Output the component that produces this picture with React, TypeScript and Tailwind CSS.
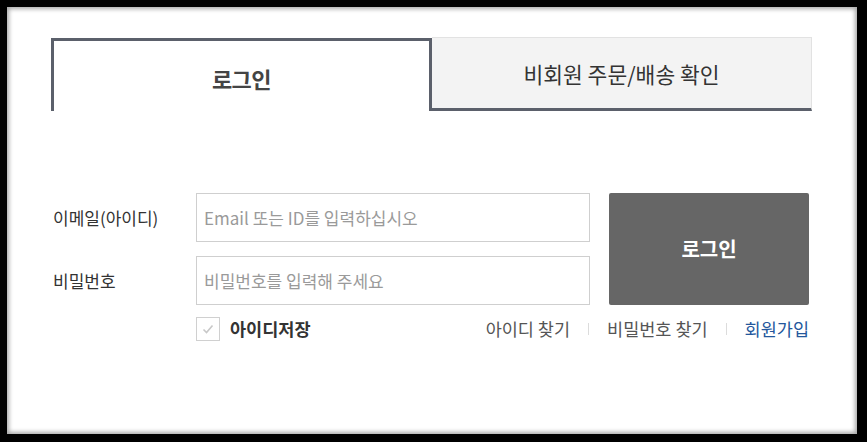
const font = "font-['Noto_Sans_CJK_KR','Noto_Sans',sans-serif]";

function Tabs() {
  return (
    <div className="flex items-end">
      <div className="flex h-[73px] w-[381px] items-center justify-center border-[3px] border-b-0 border-[#5b606b] bg-white pt-[4px]">
        <span className="text-[22px] font-bold leading-none tracking-[-0.5px] text-[#444]">로그인</span>
      </div>
      <div className="flex h-[74px] w-[380px] items-center justify-center border-t border-r border-b-[3px] border-t-[#e2e2e2] border-r-[#e2e2e2] border-b-[#5b606b] bg-[#f3f3f3] pt-[2px]">
        <span className="text-[21.5px] leading-none text-[#333]">비회원 주문/배송 확인</span>
      </div>
    </div>
  );
}

function Field({ label, placeholder, type }: { label: string; placeholder: string; type: string }) {
  return (
    <div className="flex items-center">
      <label className="w-[145px] pl-[2px] text-[17px] leading-none text-[#333]">{label}</label>
      <input
        type={type}
        placeholder={placeholder}
        className={`${font} h-[49px] w-[394px] border border-[#cfcfcf] bg-white pl-[7px] text-[17px] text-[#333] outline-none placeholder:text-[#9a9a9a]`}
      />
    </div>
  );
}

function Divider() {
  return <span className="mx-[18px] h-[12px] w-px bg-[#dcdcdc]" />;
}

export default function App() {
  return (
    <div className={`${font} h-[442px] w-[867px] bg-black pt-[7px] pr-[10px] pb-[8px] pl-[7px]`}>
      <div className="h-full w-full bg-white pt-[30px] pl-[44px] shadow-[inset_0_0_4px_2px_rgba(0,0,0,0.35)]">
        <Tabs />

        <div className="mt-[82px] flex">
          <div className="flex flex-col gap-[14px]">
            <Field label="이메일(아이디)" placeholder="Email 또는 ID를 입력하십시오" type="text" />
            <Field label="비밀번호" placeholder="비밀번호를 입력해 주세요" type="password" />
          </div>
          <button className="ml-[19px] flex h-[112px] w-[200px] items-center justify-center rounded-[2px] bg-[#666666] text-[20px] font-bold text-white">
            로그인
          </button>
        </div>

        <div className="mt-[12px] flex w-[758px] items-center">
          <div className="ml-[145px] flex items-center gap-[10px]">
            <span className="flex h-[24px] w-[24px] items-center justify-center border border-[#d0d0d0] bg-white">
              <svg width="14" height="14" viewBox="0 0 14 14" fill="none">
                <path d="M2.5 7.5 L5.5 10.5 L11.5 3.5" stroke="#c8c8c8" strokeWidth="1.6" />
              </svg>
            </span>
            <span className="text-[17.5px] font-bold leading-none text-[#333]">아이디저장</span>
          </div>
          <div className="ml-auto flex items-center text-[17.5px] leading-none">
            <span className="text-[#555]">아이디 찾기</span>
            <Divider />
            <span className="text-[#555]">비밀번호 찾기</span>
            <Divider />
            <span className="text-[#24579c]">회원가입</span>
          </div>
        </div>
      </div>
    </div>
  );
}
